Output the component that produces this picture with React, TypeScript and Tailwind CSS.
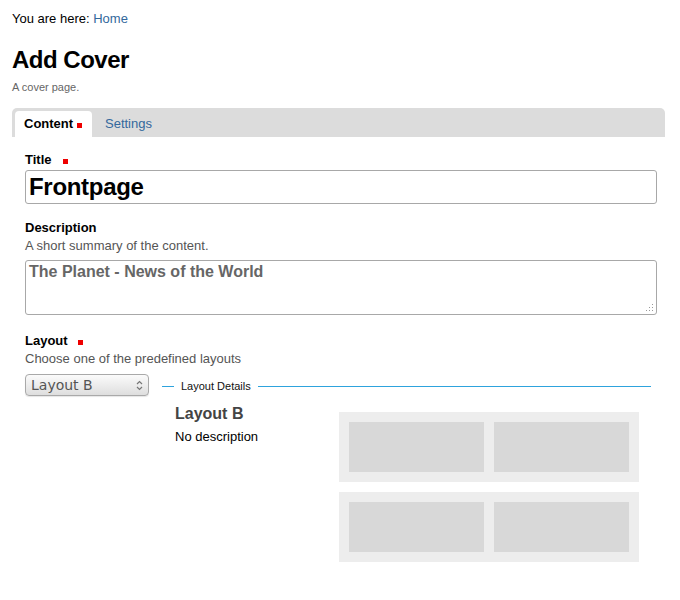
import React from 'react';

const Req = ({ className = '' }: { className?: string }) => (
  <span className={`inline-block w-[5px] h-[5px] bg-[#e00] align-baseline ${className}`} />
);

const Cell = () => <div className="h-[50px] bg-[#d8d8d8]" />;

const LayoutRow = () => (
  <div className="grid grid-cols-2 gap-[10px] p-[10px] bg-[#ededed]">
    <Cell />
    <Cell />
  </div>
);

const App = () => {
  return (
    <div className="min-h-[600px] bg-white px-3 pt-[11px] font-['Liberation_Sans',Arial,sans-serif] text-black">
      <p className="text-[13px] leading-4">
        You are here: <a className="text-[#33689c]">Home</a>
      </p>
      <h1 className="mt-[18px] text-[24px] leading-[30px] font-bold tracking-[-0.5px]">Add Cover</h1>
      <p className="mt-[5px] text-[11px] leading-[14px] text-[#666]">A cover page.</p>

      <div className="mt-[14px] mr-[3px] flex h-[29px] items-end gap-[3px] rounded-t-[5px] bg-[#dcdcdc] pl-[3px]">
        <div className="flex h-[26px] w-[77px] items-center rounded-t-[4px] bg-white pl-[9px] text-[13px] font-bold">
          Content
          <Req className="ml-[4px] mt-[3px]" />
        </div>
        <div className="flex h-[26px] items-center px-[10px] text-[13px] text-[#33689c]">Settings</div>
      </div>

      <div className="pl-[13px] pr-[11px]">
        <label className="mt-[15px] flex items-center text-[13px] leading-4 font-bold">
          Title
          <Req className="ml-[11px] mt-[2px]" />
        </label>
        <div className="mt-[2px] flex h-[34px] items-center rounded-[3px] border border-[#a8a8a8] pl-[3px] text-[24px] font-bold tracking-[-0.3px]">
          Frontpage
        </div>

        <label className="mt-[15px] block text-[13px] leading-[18px] font-bold">Description</label>
        <p className="text-[13px] leading-[18px] text-[#555]">A short summary of the content.</p>
        <div className="relative mt-[5px] h-[55px] rounded-[3px] border border-[#a8a8a8] px-[3px] pt-[1px] text-[16px] leading-5 font-bold text-[#666]">
          The Planet - News of the World
          <svg className="absolute right-[2px] bottom-[2px]" width="8" height="8" viewBox="0 0 8 8">
            <g fill="#999">
              <rect x="6" y="0" width="1" height="1" />
              <rect x="3" y="3" width="1" height="1" />
              <rect x="6" y="3" width="1" height="1" />
              <rect x="0" y="6" width="1" height="1" />
              <rect x="3" y="6" width="1" height="1" />
              <rect x="6" y="6" width="1" height="1" />
            </g>
          </svg>
        </div>

        <label className="mt-[17px] flex items-center text-[13px] leading-[18px] font-bold">
          Layout
          <Req className="ml-[10px] mt-[2px]" />
        </label>
        <p className="text-[13px] leading-[18px] text-[#555]">Choose one of the predefined layouts</p>

        <div className="mt-[6px] flex items-start gap-[13px]">
          <div className="flex h-[22px] w-[124px] shrink-0 items-center justify-between rounded-[4px] border border-[#a9a9a9] bg-gradient-to-b from-[#fbfbfb] to-[#dedede] pl-[5px] pr-[5px] font-['DejaVu_Sans',sans-serif] text-[14px] text-[#555] shadow-[0_1px_1px_rgba(0,0,0,0.1)]">
            Layout B
            <svg width="7" height="11" viewBox="0 0 7 11">
              <path d="M1 4 L3.5 1.5 L6 4" fill="none" stroke="#777" strokeWidth="1.2" />
              <path d="M1 7 L3.5 9.5 L6 7" fill="none" stroke="#777" strokeWidth="1.2" />
            </svg>
          </div>

          <div className="mr-[6px] flex-1">
            <div className="mt-[5px] flex items-center">
              <div className="h-px w-[12px] bg-[#2ea3dd]" />
              <span className="px-[7px] text-[11px] leading-[14px] text-[#111]">Layout Details</span>
              <div className="h-px flex-1 bg-[#2ea3dd]" />
            </div>
            <div className="flex pl-[13px]">
              <div className="w-[164px] shrink-0">
                <h2 className="mt-[11px] text-[16px] leading-5 font-bold text-[#444]">Layout B</h2>
                <p className="mt-[5px] text-[13px] leading-4">No description</p>
              </div>
              <div className="mt-[19px] flex w-[300px] flex-col gap-[10px]">
                <LayoutRow />
                <LayoutRow />
              </div>
            </div>
          </div>
        </div>
      </div>
    </div>
  );
};

export default App;
